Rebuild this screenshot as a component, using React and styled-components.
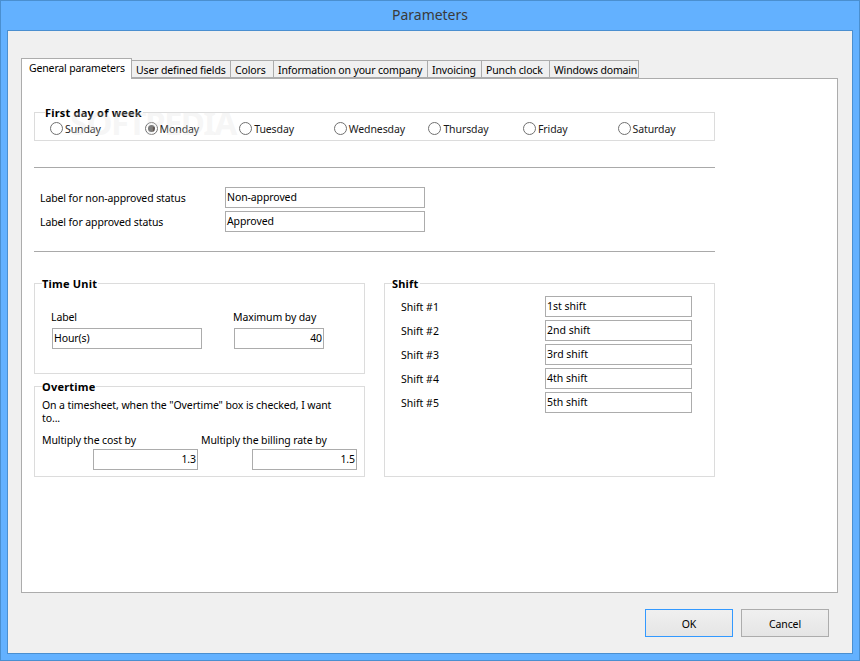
import React from "react";
import styled, { createGlobalStyle } from "styled-components";

const GlobalStyle = createGlobalStyle`
    html, body {
        margin: 0;
        padding: 0;
        overflow: hidden;
    }
    body {
        font-family: "Noto Sans", "Open Sans", sans-serif;
        font-size: 10.5px;
        letter-spacing: -0.1px;
        color: #000;
    }
`;

const Window = styled.div`
    box-sizing: border-box;
    width: 860px;
    height: 661px;
    display: flex;
    flex-direction: column;
    background: #63b1ff;
    border: 1px solid #4a8fd0;
`;

const TitleBar = styled.div`
    height: 29px;
    line-height: 28px;
    text-align: center;
    font-size: 14px;
    letter-spacing: -0.03px;
    color: #3a3a3a;
    flex: none;
`;

const Client = styled.div`
    flex: none;
    box-sizing: border-box;
    width: 846px;
    height: 624px;
    margin-left: 6px;
    padding: 27px 0 0 13px;
    background: #f0f0f0;
    border: 1px solid #4a8fd0;
`;

const TabStrip = styled.div`
    display: flex;
    align-items: flex-end;
    height: 20px;
`;

const Tab = styled.div`
    box-sizing: border-box;
    height: ${(p) => (p.$active ? "21px" : "18px")};
    margin-bottom: ${(p) => (p.$active ? "-1px" : "0")};
    width: ${(p) => p.$width}px;
    padding-left: ${(p) => (p.$active ? "7px" : "4px")};
    line-height: 18px;
    letter-spacing: -0.15px;
    white-space: nowrap;
    background: ${(p) => (p.$active ? "#fff" : "#f0f0f0")};
    border: 1px solid #acacac;
    border-bottom: ${(p) => (p.$active ? "none" : "1px solid #acacac")};
    position: relative;
    z-index: ${(p) => (p.$active ? 1 : 0)};
    & + & {
        margin-left: -1px;
    }
`;

const Panel = styled.div`
    box-sizing: border-box;
    width: 817px;
    height: 515px;
    padding: 33px 0 0 12px;
    background: #fff;
    border: 1px solid #acacac;
    position: relative;
`;

const Group = styled.div`
    box-sizing: border-box;
    border: 1px solid #dcdcdc;
    width: ${(p) => p.$width || 331}px;
    height: ${(p) => p.$height}px;
    padding-left: ${(p) => p.$left || 7}px;
`;

const GroupTitle = styled.div`
    font-weight: 700;
    line-height: 14px;
    height: 14px;
    margin-top: -7px;
    width: max-content;
    background: #fff;
    padding-right: 1px;
    font-size: 11px;
    letter-spacing: 0.2px;
`;

const DayRow = styled.div`
    display: grid;
    grid-template-columns: repeat(7, 94.6px);
    margin: 1px 0 0 5px;
`;

const Day = styled.label`
    display: flex;
    align-items: center;
    gap: 2px;
    height: 15px;
    color: #1a1a1a;
`;

const Radio = styled.span`
    box-sizing: border-box;
    width: 13px;
    height: 13px;
    border-radius: 50%;
    border: 1px solid #707070;
    background: #fff;
    display: flex;
    align-items: center;
    justify-content: center;
    flex: none;
    &::after {
        content: "";
        display: ${(p) => (p.$checked ? "block" : "none")};
        width: 7px;
        height: 7px;
        border-radius: 50%;
        background: #555;
    }
`;

const Rule = styled.div`
    width: 681px;
    height: 1px;
    background: #a9a9a9;
    margin-top: ${(p) => p.$top}px;
`;

const StatusRow = styled.div`
    display: grid;
    grid-template-columns: 185px 200px;
    align-items: center;
    padding-left: 6px;
    margin-top: ${(p) => p.$top}px;
`;

const Field = styled.div`
    box-sizing: border-box;
    width: ${(p) => p.$width}px;
    height: 21px;
    line-height: 18px;
    padding: 0 1px;
    text-align: ${(p) => (p.$right ? "right" : "left")};
    background: #fff;
    border: 1px solid #acacac;
    white-space: nowrap;
`;

const Columns = styled.div`
    display: grid;
    grid-template-columns: 331px 331px;
    column-gap: 19px;
    margin-top: 31px;
`;

const LeftColumn = styled.div`
    display: flex;
    flex-direction: column;
    gap: 12px;
`;

const TimeGrid = styled.div`
    display: grid;
    grid-template-columns: 182px 90px;
    padding: 19px 0 0 10px;
`;

const SmallLabel = styled.div`
    line-height: 14px;
    height: 14px;
    margin-bottom: 4px;
    margin-left: ${(p) => p.$left || 0}px;
`;

const Paragraph = styled.div`
    width: 310px;
    line-height: 13px;
    margin-top: 5px;
`;

const CostGrid = styled.div`
    display: grid;
    grid-template-columns: 159px 156px;
    margin-top: 8px;
`;

const CostCell = styled.div`
    display: flex;
    flex-direction: column;
`;

const CostField = styled(Field)`
    margin-left: ${(p) => p.$left}px;
    margin-top: -2px;
`;

const ShiftList = styled.div`
    display: flex;
    flex-direction: column;
    gap: 3px;
    padding: 5px 0 0 9px;
`;

const ShiftRow = styled.div`
    display: grid;
    grid-template-columns: 144px 147px;
    align-items: center;
    letter-spacing: 0;
`;

const Footer = styled.div`
    display: flex;
    justify-content: flex-end;
    gap: 8px;
    width: 808px;
    margin-top: 16px;
`;

const Button = styled.button`
    box-sizing: border-box;
    width: 88px;
    height: 28px;
    padding: 2px 0 0;
    font: inherit;
    letter-spacing: inherit;
    color: #000;
    background: linear-gradient(#f0f0f0, #e5e5e5);
    border: 1px solid ${(p) => (p.$primary ? "#3399ff" : "#acacac")};
`;

const Watermark = styled.div`
    position: absolute;
    left: 48px;
    top: 24px;
    font-size: 33px;
    line-height: 40px;
    font-weight: 700;
    letter-spacing: -1.6px;
    color: rgba(225, 225, 225, 0.3);
    pointer-events: none;
`;

const days = ["Sunday", "Monday", "Tuesday", "Wednesday", "Thursday", "Friday", "Saturday"];
const tabs = [
    ["General parameters", 111],
    ["User defined fields", 100],
    ["Colors", 44],
    ["Information on your company", 155],
    ["Invoicing", 55],
    ["Punch clock", 69],
    ["Windows domain", 90],
];
const shifts = ["1st shift", "2nd shift", "3rd shift", "4th shift", "5th shift"];

export default function App() {
    return (
        <Window>
            <GlobalStyle />
            <TitleBar>Parameters</TitleBar>
            <Client>
                <TabStrip>
                    {tabs.map(([name, width], i) => (
                        <Tab key={name} $width={width} $active={i === 0}>{name}</Tab>
                    ))}
                </TabStrip>
                <Panel>
                    <Group $width={681} $height={29} $left={10}>
                        <GroupTitle>First day of week</GroupTitle>
                        <DayRow>
                            {days.map((d, i) => (
                                <Day key={d}>
                                    <Radio $checked={i === 1} />
                                    {d}
                                </Day>
                            ))}
                        </DayRow>
                    </Group>
                    <Watermark>SOFTPEDIA</Watermark>
                    <Rule $top={26} />
                    <StatusRow $top={19}>
                        Label for non-approved status
                        <Field $width={200}>Non-approved</Field>
                    </StatusRow>
                    <StatusRow $top={3}>
                        Label for approved status
                        <Field $width={200}>Approved</Field>
                    </StatusRow>
                    <Rule $top={19} />
                    <Columns>
                        <LeftColumn>
                            <Group $height={91}>
                                <GroupTitle>Time Unit</GroupTitle>
                                <TimeGrid>
                                    <div>
                                        <SmallLabel $left={-1}>Label</SmallLabel>
                                        <Field $width={150}>Hour(s)</Field>
                                    </div>
                                    <div>
                                        <SmallLabel $left={-1}>Maximum by day</SmallLabel>
                                        <Field $width={90} $right>40</Field>
                                    </div>
                                </TimeGrid>
                            </Group>
                            <Group $height={91}>
                                <GroupTitle>Overtime</GroupTitle>
                                <Paragraph>
                                    On a timesheet, when the "Overtime" box is checked, I want to...
                                </Paragraph>
                                <CostGrid>
                                    <CostCell>
                                        <SmallLabel>Multiply the cost by</SmallLabel>
                                        <CostField $width={105} $left={51} $right>1.3</CostField>
                                    </CostCell>
                                    <CostCell>
                                        <SmallLabel>Multiply the billing rate by</SmallLabel>
                                        <CostField $width={105} $left={51} $right>1.5</CostField>
                                    </CostCell>
                                </CostGrid>
                            </Group>
                        </LeftColumn>
                        <Group $height={194}>
                            <GroupTitle>Shift</GroupTitle>
                            <ShiftList>
                                {shifts.map((s, i) => (
                                    <ShiftRow key={s}>
                                        Shift #{i + 1}
                                        <Field $width={147}>{s}</Field>
                                    </ShiftRow>
                                ))}
                            </ShiftList>
                        </Group>
                    </Columns>
                </Panel>
                <Footer>
                    <Button $primary>OK</Button>
                    <Button>Cancel</Button>
                </Footer>
            </Client>
        </Window>
    );
}
